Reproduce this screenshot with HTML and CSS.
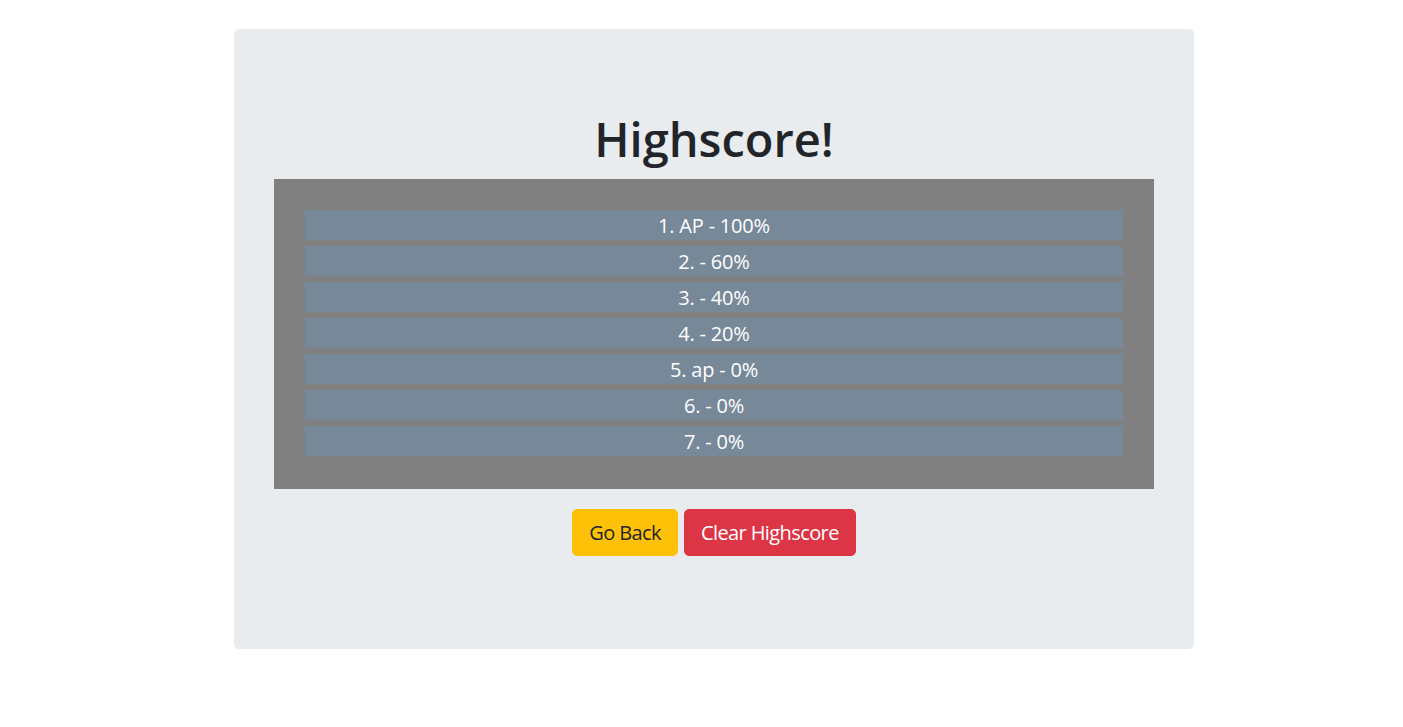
FILE: index.html
```html
<!DOCTYPE html>
<html lang="en">
<head>
<meta charset="utf-8">
<title>Highscore</title>
<link rel="stylesheet" href="styles.css">
</head>
<body>
<div class="page">
  <div class="jumbotron">
    <h1 class="title">Highscore!</h1>
    <div class="board">
      <div class="row">1. AP - 100%</div>
      <div class="row">2. - 60%</div>
      <div class="row">3. - 40%</div>
      <div class="row">4. - 20%</div>
      <div class="row">5. ap - 0%</div>
      <div class="row">6. - 0%</div>
      <div class="row">7. - 0%</div>
    </div>
    <div class="actions">
      <button class="btn btn-warning">Go Back</button>
      <button class="btn btn-danger">Clear Highscore</button>
    </div>
  </div>
</div>
</body>
</html>
```

FILE: styles.css
```css
* { box-sizing: border-box; }
html, body { margin: 0; padding: 0; background: #fff; }
body {
  font-family: "Open Sans", "Noto Sans", sans-serif;
  color: #212529;
}
.page { padding: 29px 0 0 25px; }
.jumbotron {
  width: 960px;
  margin: 0 auto;
  background: #e9ecef;
  border-radius: 5px;
  padding: 81px 40px 93px;
  text-align: center;
}
.title {
  margin: 0 0 11px;
  font-size: 47px;
  line-height: 58px;
  font-weight: 600;
  color: #212529;
}
.board {
  background: #808080;
  padding: 31px 31px 33px;
  display: flex;
  flex-direction: column;
  gap: 6px;
}
.row {
  background: #778899;
  color: #fff;
  font-size: 20px;
  line-height: 30px;
  height: 30px;
  padding-top: 1px;
  letter-spacing: -0.2px;
}
.actions {
  margin-top: 20px;
  display: flex;
  justify-content: center;
  gap: 6px;
}
.btn {
  font-family: inherit;
  font-size: 20px;
  line-height: 29px;
  padding: 8px 16px;
  border: 1px solid transparent;
  border-radius: 5px;
  letter-spacing: -0.6px;
  cursor: pointer;
}
.btn-warning { background: #ffc107; border-color: #ffc107; color: #212529; }
.btn-danger { background: #dc3545; border-color: #dc3545; color: #fff; }
```
